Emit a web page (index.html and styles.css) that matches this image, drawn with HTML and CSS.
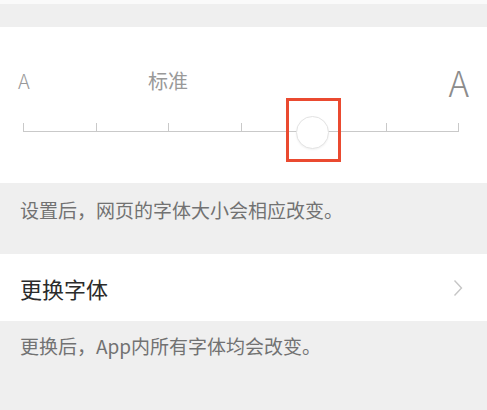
FILE: index.html
```html
<!DOCTYPE html>
<html lang="zh-CN">
  <head>
    <meta charset="UTF-8" />
    <meta name="viewport" content="width=device-width, initial-scale=1.0" />
    <title>字体大小</title>
    <link rel="stylesheet" href="styles.css">
  </head>
  <body>
    <main>
      <div class="Edge"></div>
      <section class="Card">
        <div class="Labels">
          <span class="LabelSmall">A</span>
          <span class="LabelStd">标准</span>
          <span class="LabelLarge">A</span>
        </div>
        <div class="Slider">
          <div class="Track">
            <span></span><span></span><span></span>
            <span></span><span></span><span></span>
          </div>
          <div class="Thumb"></div>
          <div class="Highlight"></div>
        </div>
      </section>
      <p class="Note">设置后，网页的字体大小会相应改变。</p>
      <div class="Row">
        <span>更换字体</span>
        <svg class="Chevron" width="10" height="18" viewBox="0 0 10 18">
          <path d="M1.5 1.5 L8.5 9 L1.5 16.5" fill="none" stroke="#c6c6c6" stroke-width="1.4" />
        </svg>
      </div>
      <p class="Note Note--last">更换后，App内所有字体均会改变。</p>
    </main>
  </body>
</html>
```

FILE: styles.css
```css
:root {
  --color-bg: #efefef;
  --color-text: #333333;
  --color-muted: #727272;
  --color-line: #c9c9c9;
  --color-accent: #ea4a30;
}

body {
  margin: 0;
  font-family: "Noto Sans CJK SC", "Noto Sans", sans-serif;
  background-color: var(--color-bg);
  color: var(--color-text);
}

main {
  height: 410px;
  overflow: hidden;
}

.Edge {
  height: 4px;
  margin-bottom: 23px;
  background: #fafafa;
}

.Card {
  background: #fff;
  padding: 37px 0 51px;
}

.Labels {
  display: flex;
  align-items: center;
  height: 34px;
  padding: 0 18px;
  color: #999;
}

.LabelSmall,
.LabelLarge {
  font-family: "Noto Sans CJK SC", "Noto Sans", sans-serif;
  font-weight: 300;
  line-height: 1;
}

.LabelSmall {
  font-size: 20px;
  width: 130px;
}

.LabelStd {
  font-size: 20px;
  line-height: 1;
  flex: 1;
}

.LabelLarge {
  font-size: 35px;
  color: #8c8c8c;
}

.Slider {
  position: relative;
  margin: 0 28px 0 23px;
  padding-top: 25px;
}

.Track {
  display: flex;
}

.Track span {
  flex: 1;
  height: 8px;
  border-left: 1px solid var(--color-line);
  border-bottom: 1px solid var(--color-line);
}

.Track span:last-child {
  border-right: 1px solid var(--color-line);
}

.Thumb {
  position: absolute;
  top: 18px;
  left: calc(66.666% - 18px);
  width: 31px;
  height: 31px;
  border: 1px solid #e3e3e3;
  border-radius: 50%;
  background: #fff;
  box-shadow: 0 1px 2px rgba(0, 0, 0, 0.05);
}

.Highlight {
  position: absolute;
  top: 0;
  left: calc(66.666% - 28px);
  width: 49px;
  height: 58px;
  border: 3px solid var(--color-accent);
}

.Note {
  margin: 0;
  height: 71px;
  box-sizing: border-box;
  padding: 14px 20px 0;
  font-size: 19px;
  line-height: 26px;
  color: var(--color-muted);
}

.Note--last {
  padding-top: 12px;
}

.Row {
  display: flex;
  align-items: center;
  justify-content: space-between;
  height: 67px;
  padding: 0 24px 0 20px;
  background: #fff;
  font-size: 22px;
  color: #2b2b2b;
}
```
